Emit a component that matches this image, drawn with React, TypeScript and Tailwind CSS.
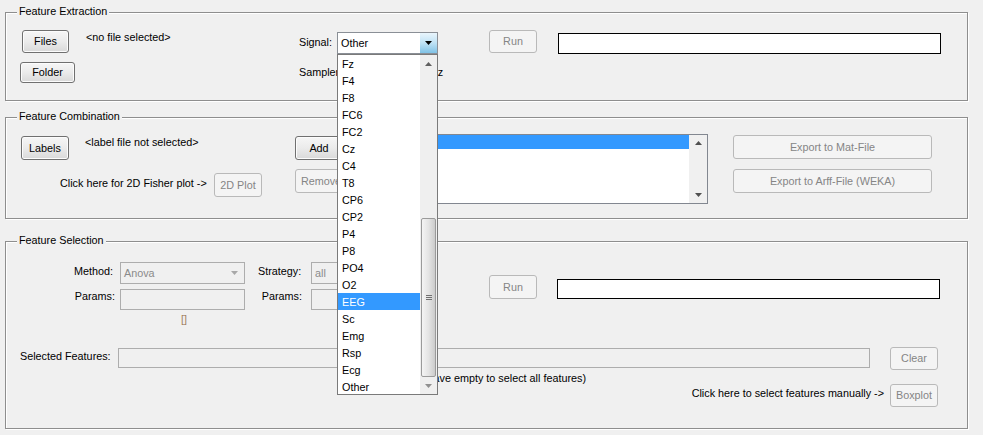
import React from "react";

const txt = "text-[10.8px] leading-[13px] text-black whitespace-nowrap";

function Btn({ children, disabled, className = "" }: { children?: React.ReactNode; disabled?: boolean; className?: string }) {
  return (
    <div
      className={`flex shrink-0 items-center justify-center rounded-[3px] border text-[10.8px] leading-none whitespace-nowrap ${
        disabled
          ? "border-[#b9b9b9] bg-[#f4f4f4] text-[#858585]"
          : "border-[#707070] bg-gradient-to-b from-[#f6f6f6] via-[#ebebeb] to-[#d9d9d9] text-black shadow-[inset_0_0_0_1px_#fcfcfc]"
      } ${className}`}
    >
      {children}
    </div>
  );
}

function Tri({ dir, color }: { dir: "up" | "down"; color: string }) {
  return (
    <svg width="7" height="4" viewBox="0 0 7 4">
      {dir === "up" ? <polygon points="0,4 7,4 3.5,0" fill={color} /> : <polygon points="0,0 7,0 3.5,4" fill={color} />}
    </svg>
  );
}

function Panel({ title, className = "", children }: { title: string; className?: string; children?: React.ReactNode }) {
  return (
    <div className={`relative ml-[5px] w-[963px] shrink-0 border border-[#8e8e8e] shadow-[inset_1px_1px_0_#ffffff,1px_1px_0_#ffffff] ${className}`}>
      <div className={`absolute left-[11px] top-[-8px] bg-[#f0f0f0] px-[2px] ${txt}`}>{title}</div>
      {children}
    </div>
  );
}

const items = ["Fz", "F4", "F8", "FC6", "FC2", "Cz", "C4", "T8", "CP6", "CP2", "P4", "P8", "PO4", "O2", "EEG", "Sc", "Emg", "Rsp", "Ecg", "Other"];

export default function App() {
  return (
    <div className="relative flex h-[435px] w-[983px] flex-col overflow-hidden bg-[#f0f0f0] font-['Liberation_Sans',Arial,sans-serif]">
      {/* Feature Extraction */}
      <Panel title="Feature Extraction" className="mt-[12px] h-[89px]">
        <div className="mt-[17px] flex h-[24px] items-start">
          <Btn className="ml-[16px] h-[23px] w-[47px]">Files</Btn>
          <div className={`ml-[17px] mt-[1px] w-[213px] ${txt}`}>&lt;no file selected&gt;</div>
          <div className={`mt-[6px] w-[38px] ${txt}`}>Signal:</div>
          <div className="mt-[2px] flex h-[22px] w-[101px] shrink-0 border border-[#8a8f96] bg-white">
            <div className={`flex-1 pl-[3px] pt-[4px] ${txt}`}>Other</div>
            <div className="flex w-[17px] items-center justify-center bg-gradient-to-b from-[#e9f5fc] via-[#bfe2f5] to-[#7fc2e6]">
              <Tri dir="down" color="#000" />
            </div>
          </div>
          <Btn disabled className="ml-[51px] h-[23px] w-[48px]">Run</Btn>
          <div className="ml-[21px] mt-[3px] h-[21px] w-[383px] shrink-0 border border-black bg-white" />
        </div>
        <div className="mt-[8px] flex items-start">
          <Btn className="ml-[14px] h-[21px] w-[55px]">Folder</Btn>
          <div className={`ml-[224px] mt-[4px] w-[38px] overflow-hidden ${txt}`}>Samplerate:</div>
          <div className={`ml-[101px] mt-[4px] w-[7px] overflow-hidden ${txt}`}>
            <span className="ml-[-8px]">Hz</span>
          </div>
        </div>
      </Panel>

      {/* Feature Combination */}
      <Panel title="Feature Combination" className="mt-[16px] h-[102px]">
        <div className="mt-[16px] flex items-start">
          <div className="w-[289px] shrink-0">
            <div className="mt-[2px] flex items-start">
              <Btn className="ml-[15px] h-[24px] w-[48px]">Labels</Btn>
              <div className={`ml-[16px] ${txt}`}>&lt;label file not selected&gt;</div>
            </div>
            <div className="mt-[13px] flex items-start">
              <div className={`ml-[54px] mt-[4px] w-[154px] ${txt}`}>Click here for 2D Fisher plot -&gt;</div>
              <Btn disabled className="h-[24px] w-[48px]">2D Plot</Btn>
            </div>
          </div>
          <div className="w-[52px] shrink-0">
            <Btn className="mt-[2px] h-[24px] w-[48px]">Add</Btn>
            <Btn disabled className="mt-[9px] h-[24px] w-[52px]">Remove</Btn>
          </div>
          <div className="ml-[8px] flex h-[70px] w-[353px] shrink-0 border border-[#828790] bg-white">
            <div className="flex-1">
              <div className="h-[14px] bg-[#3399ff]" />
            </div>
            <div className="flex w-[18px] flex-col items-center justify-between bg-[#f0f0f0] py-[6px]">
              <Tri dir="up" color="#505050" />
              <Tri dir="down" color="#505050" />
            </div>
          </div>
          <div className="ml-[25px] w-[199px] shrink-0">
            <Btn disabled className="mt-[1px] h-[24px] w-[199px]">Export to Mat-File</Btn>
            <Btn disabled className="mt-[10px] h-[24px] w-[199px]">Export to Arff-File (WEKA)</Btn>
          </div>
        </div>
      </Panel>

      {/* Feature Selection */}
      <Panel title="Feature Selection" className="mt-[22px] h-[188px]">
        <div className="flex h-[84px] items-start pt-[20px]">
          <div className="w-[483px] shrink-0">
            <div className="flex h-[22px] items-start">
              <div className={`mt-[3px] w-[107px] text-right ${txt}`}>Method:</div>
              <div className="ml-[7px] flex h-[22px] w-[125px] shrink-0 items-center justify-between border border-[#adadad] bg-[#f0f0f0] pl-[3px] pr-[6px]">
                <span className="text-[10.8px] leading-[13px] text-[#8a8a8a]">Anova</span>
                <Tri dir="down" color="#a8a8a8" />
              </div>
              <div className={`ml-[13px] mt-[3px] w-[44px] ${txt}`}>Strategy:</div>
              <div className="ml-[9px] flex h-[22px] w-[125px] shrink-0 items-center border border-[#adadad] bg-[#f0f0f0] pl-[3px]">
                <span className="text-[10.8px] leading-[13px] text-[#8a8a8a]">all</span>
              </div>
            </div>
            <div className="mt-[5px] flex h-[21px] items-start">
              <div className={`mt-[1px] w-[109px] text-right ${txt}`}>Params:</div>
              <div className="ml-[5px] h-[21px] w-[125px] shrink-0 border border-[#adadad] bg-[#f0f0f0]" />
              <div className={`mt-[1px] w-[57px] text-right ${txt}`}>Params:</div>
              <div className="ml-[9px] h-[21px] w-[125px] shrink-0 border border-[#adadad] bg-[#f0f0f0]" />
            </div>
            <div className="ml-[175px] mt-[3px] text-[10.8px] leading-[13px] text-[#a08060]">[]</div>
          </div>
          <Btn disabled className="mt-[13px] h-[24px] w-[48px]">Run</Btn>
          <div className="ml-[20px] mt-[17px] h-[20px] w-[383px] shrink-0 border border-black bg-white" />
        </div>
        <div className="mt-[21px] flex items-start">
          <div className={`ml-[14px] mt-[3px] w-[98px] ${txt}`}>Selected Features:</div>
          <div className="mt-[1px] h-[20px] w-[752px] shrink-0 border border-[#adadad] bg-[#f0f0f0]" />
          <Btn disabled className="ml-[20px] h-[23px] w-[48px]">Clear</Btn>
        </div>
        <div className={`mt-[2px] h-[12px] w-[580px] text-right leading-[12px] ${txt}`}>(leave empty to select all features)</div>
        <div className="flex items-start">
          <div className={`mt-[3px] w-[878px] text-right ${txt}`}>Click here to select features manually -&gt;</div>
          <Btn disabled className="ml-[6px] h-[23px] w-[48px]">Boxplot</Btn>
        </div>
      </Panel>

      {/* Open dropdown list */}
      <div className="absolute left-[337px] top-[54px] flex h-[341px] w-[101px] border border-[#7a7a7a] bg-white">
        <div className="w-[82px]">
          {items.map((it) => (
            <div
              key={it}
              className={`h-[17px] pl-[4px] text-[10.8px] leading-[18px] ${it === "EEG" ? "bg-[#3399ff] text-white" : "text-black"}`}
            >
              {it}
            </div>
          ))}
        </div>
        <div className="flex w-[17px] flex-col bg-[#efefef]">
          <div className="flex h-[17px] items-center justify-center">
            <Tri dir="up" color="#606060" />
          </div>
          <div className="flex-1" />
          <div className="mx-[1px] flex h-[159px] flex-col items-center justify-center gap-[1px] rounded-[2px] border border-[#9a9a9a] bg-gradient-to-r from-[#f4f4f4] via-[#e4e4e4] to-[#cbcbcb]">
            <div className="h-px w-[6px] bg-[#707070]" />
            <div className="h-px w-[6px] bg-[#707070]" />
            <div className="h-px w-[6px] bg-[#707070]" />
          </div>
          <div className="flex h-[17px] items-center justify-center">
            <Tri dir="down" color="#909090" />
          </div>
        </div>
      </div>
    </div>
  );
}
